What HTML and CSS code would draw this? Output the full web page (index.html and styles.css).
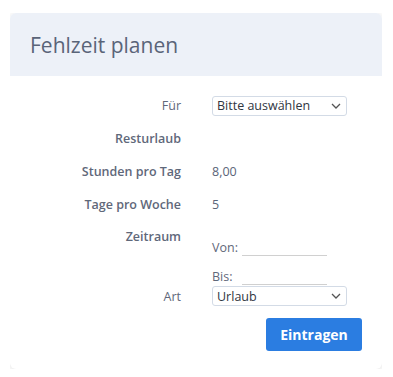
FILE: index.html
```html
<!DOCTYPE html>
<html lang="de">
<head>
    <meta charset="UTF-8">
    <meta name="viewport" content="width=device-width, initial-scale=1.0">
    <title>Fehlzeit planen</title>
    <link rel="stylesheet" href="styles.css">
</head>
<body>
    <div class="card">
        <div class="card-header">
            <h2>Fehlzeit planen</h2>
        </div>

        <div class="card-body">
            <div class="row">
                <label for="person" class="plain">Für</label>
                <div class="select-wrap">
                    <select id="person">
                        <option>Bitte auswählen</option>
                    </select>
                    <svg class="chevron" width="10" height="6" viewBox="0 0 10 6"><path d="M1 1l4 4 4-4" fill="none" stroke="#555" stroke-width="1.3"/></svg>
                </div>
            </div>

            <div class="row">
                <span class="label">Resturlaub</span>
                <span class="value"></span>
            </div>

            <div class="row">
                <span class="label">Stunden pro Tag</span>
                <span class="value">8,00</span>
            </div>

            <div class="row">
                <span class="label">Tage pro Woche</span>
                <span class="value">5</span>
            </div>

            <div class="row row-top">
                <span class="label">Zeitraum</span>
                <div class="range">
                    <div class="range-line">
                        <label for="from">Von:</label>
                        <input type="text" id="from">
                    </div>
                    <div class="range-line">
                        <label for="to">Bis:</label>
                        <input type="text" id="to">
                    </div>
                </div>
            </div>

            <div class="row row-tight">
                <label for="type" class="plain">Art</label>
                <div class="select-wrap">
                    <select id="type">
                        <option>Urlaub</option>
                    </select>
                    <svg class="chevron" width="10" height="6" viewBox="0 0 10 6"><path d="M1 1l4 4 4-4" fill="none" stroke="#555" stroke-width="1.3"/></svg>
                </div>
            </div>

            <div class="actions">
                <button>Eintragen</button>
            </div>
        </div>
    </div>
</body>
</html>
```

FILE: styles.css
```css
body {
    font-family: "Open Sans", "Noto Sans", sans-serif;
    margin: 13px 11px 8px 10px;
    background-color: #fff;
    color: #5a6478;
    font-size: 12.5px;
}

.card {
    background: white;
    border-radius: 6px;
    box-shadow: 0 1px 7px rgba(0, 0, 0, 0.13);
    overflow: hidden;
}

.card-header {
    background-color: #edf1f8;
    height: 63px;
    display: flex;
    align-items: center;
    padding: 0 20px;
}

.card-header h2 {
    margin: 0;
    font-size: 21px;
    font-weight: 400;
    color: #5a6478;
}

.card-body {
    padding: 13px 20px 18px 0;
}

.row {
    display: grid;
    grid-template-columns: 171px 1fr;
    column-gap: 31px;
    align-items: center;
    min-height: 33px;
}

.label,
.row label {
    text-align: right;
    font-weight: 600;
    color: #5f687a;
}

.row label.plain {
    font-weight: 400;
}

.row-top {
    align-items: start;
    min-height: 65px;
}

.row-top .label {
    padding-top: 7px;
}

.row-tight {
    min-height: 20px;
}

.select-wrap {
    position: relative;
    width: 135px;
}

select {
    appearance: none;
    -webkit-appearance: none;
    width: 100%;
    height: 20px;
    padding: 0 20px 0 4px;
    border: 1px solid #d3dbe6;
    border-radius: 3px;
    background: white;
    font-family: inherit;
    font-size: 12.5px;
    color: #30363f;
}

.chevron {
    position: absolute;
    right: 6px;
    top: 7px;
    pointer-events: none;
}

.range {
    padding-top: 17px;
}

.range-line {
    display: flex;
    align-items: center;
    gap: 4px;
    height: 18px;
}

.range-line + .range-line {
    margin-top: 11px;
}

.range-line label {
    width: 26px;
    font-weight: 400;
    text-align: left;
}

.range-line input {
    width: 85px;
    height: 16px;
    padding: 0;
    border: none;
    border-bottom: 1px solid #d0d0d0;
    outline: none;
}

.actions {
    display: flex;
    justify-content: flex-end;
    margin-top: 12px;
}

button {
    background-color: #2b7de1;
    color: white;
    width: 96px;
    height: 33px;
    border: none;
    border-radius: 3px;
    font-family: inherit;
    font-size: 14px;
    font-weight: 700;
    cursor: pointer;
}
```
